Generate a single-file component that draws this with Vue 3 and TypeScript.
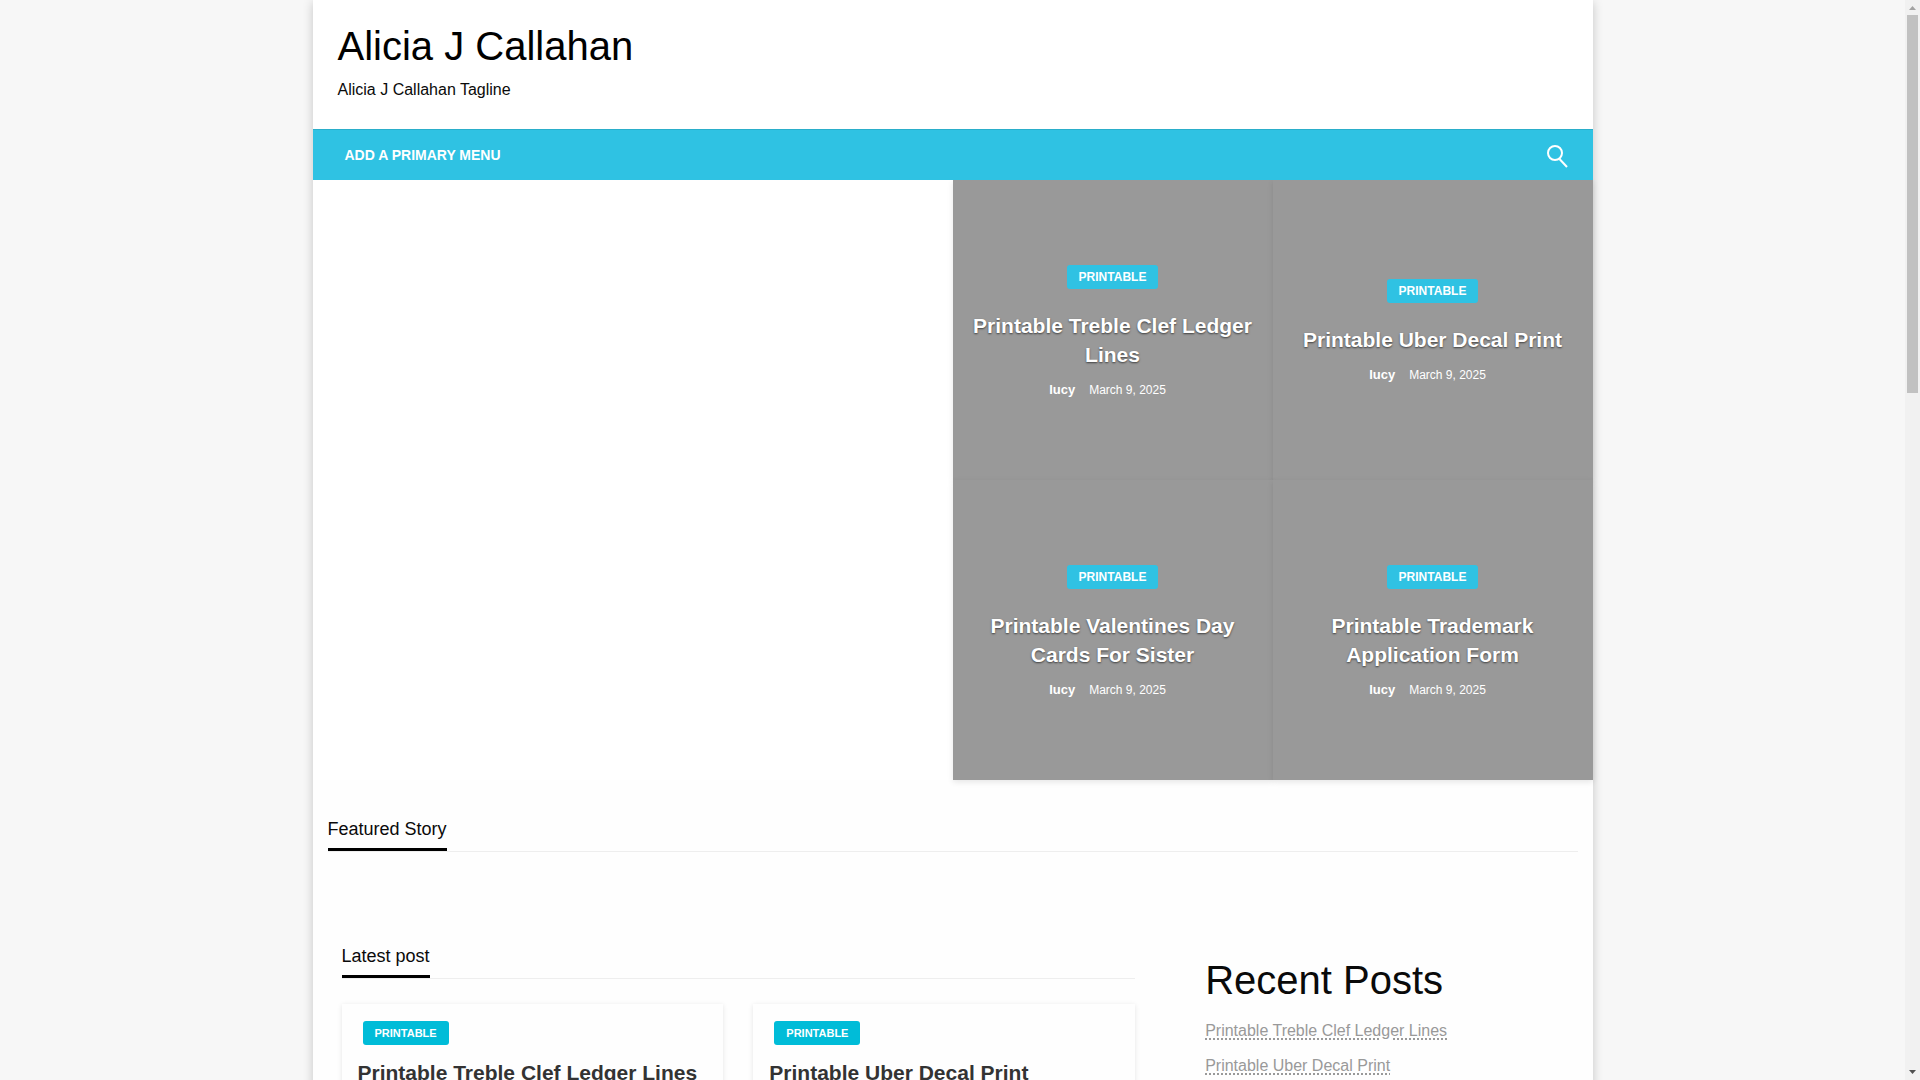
<script setup lang="ts">
interface Story {
  title: string
  category: string
  author: string
  date: string
}

const stories: Story[] = [
  'Printable Treble Clef Ledger Lines',
  'Printable Uber Decal Print',
  'Printable Valentines Day Cards For Sister',
  'Printable Trademark Application Form',
].map((title) => ({ title, category: 'Printable', author: 'lucy', date: 'March 9, 2025' }))

const latest = stories.slice(0, 2)
const recent = stories.slice(0, 2)
</script>

<template>
  <div class="viewport">
    <div class="page">
      <div class="site">
        <header class="masthead">
          <h1 class="site-title"><a href="#">Alicia J Callahan</a></h1>
          <p class="tagline">Alicia J Callahan Tagline</p>
        </header>

        <nav class="menu">
          <a class="menu-link" href="#">Add a primary menu</a>
          <button class="search" type="button" aria-label="Search">
            <svg width="24" height="24" viewBox="0 0 24 24" fill="none" stroke="#fff" stroke-width="2">
              <circle cx="10" cy="9" r="7" />
              <path d="M14.500 15L22 23" />
            </svg>
          </button>
        </nav>

        <section class="hero">
          <div class="slider"></div>
          <div class="tiles">
            <article v-for="story in stories" :key="story.title" class="tile">
              <a class="badge" href="#">{{ story.category }}</a>
              <h2 class="tile-title"><a href="#">{{ story.title }}</a></h2>
              <div class="meta">
                <a class="author" href="#">{{ story.author }}</a>
                <time class="date">{{ story.date }}</time>
              </div>
            </article>
          </div>
        </section>

        <section class="featured">
          <div class="heading"><h2>Featured Story</h2></div>
        </section>

        <div class="columns">
          <main class="posts">
            <div class="heading"><h2>Latest post</h2></div>
            <div class="cards">
              <article v-for="story in latest" :key="story.title" class="card">
                <a class="badge badge-small" href="#">{{ story.category }}</a>
                <h3 class="card-title"><a href="#">{{ story.title }}</a></h3>
              </article>
            </div>
          </main>
          <aside class="sidebar">
            <h2 class="widget-title">Recent Posts</h2>
            <ul class="recent">
              <li v-for="story in recent" :key="story.title"><a href="#">{{ story.title }}</a></li>
            </ul>
          </aside>
        </div>
      </div>
    </div>

    <div class="scrollbar" aria-hidden="true">
      <svg class="arrow" width="15" height="15" viewBox="0 0 15 15"><path d="M4 10L7.500 6L11 10Z" fill="#a3a3a3" /></svg>
      <div class="track"><div class="thumb"></div></div>
      <svg class="arrow" width="15" height="15" viewBox="0 0 15 15"><path d="M4 5L7.500 9L11 5Z" fill="#505050" /></svg>
    </div>
  </div>
</template>

<style>
body {
  margin: 0;
  background: #f7f7f7;
}
</style>

<style scoped>
.viewport {
  display: flex;
  height: 100vh;
  overflow: hidden;
  font-family: "Liberation Sans", Arial, sans-serif;
  font-size: 16px;
  line-height: 24px;
  color: #0a0a0a;
}
.viewport * {
  box-sizing: border-box;
}
a {
  color: inherit;
  text-decoration: none;
}
h1, h2, h3, p, ul {
  margin: 0;
  padding: 0;
  font-weight: 400;
}
.page {
  flex: 1;
  min-width: 0;
}
.site {
  max-width: 1280px;
  min-height: 100%;
  margin: 0 auto;
  background: #fefefe;
  box-shadow: 0 2px 10px rgba(0, 0, 0, 0.2);
}
.masthead {
  padding: 18px 25px 27px;
  background: #fff;
}
.site-title {
  margin-bottom: 4px;
  font-size: 40px;
  line-height: 56px;
  color: #000;
}
.menu {
  position: relative;
  display: flex;
  align-items: center;
  justify-content: space-between;
  height: 51px;
  padding: 0 24px 0 32px;
  background: #2fc2e3;
  border-top: 1px solid #2aaeca;
}
.menu-link {
  font-size: 14px;
  font-weight: 700;
  color: #fff;
  text-transform: uppercase;
}
.search {
  display: flex;
  padding: 2px 0 0;
  border: 0;
  background: none;
}
.hero {
  display: flex;
  background: #fff;
}
.slider {
  flex: 1;
}
.tiles {
  flex: 1;
  display: grid;
  grid-template-columns: 1fr 1fr;
  grid-auto-rows: 300px;
}
.tile {
  display: flex;
  flex-direction: column;
  align-items: center;
  justify-content: center;
  padding: 4px 16px 0;
  background: #999;
  box-shadow: 0 2px 6px rgba(0, 0, 0, 0.1);
  color: #fff;
  text-align: center;
}
.badge {
  padding: 0 12px;
  border-radius: 3px;
  background: #2fc2e3;
  font-size: 12px;
  font-weight: 700;
  line-height: 24px;
  color: #fff;
  text-transform: uppercase;
}
.tile-title {
  margin: 22px 0 11px;
  font-size: 21px;
  font-weight: 700;
  line-height: 29px;
  text-shadow: 0 1px 2px rgba(0, 0, 0, 0.6);
}
.meta {
  display: flex;
  gap: 14px;
  margin-right: 10px;
  font-size: 12px;
  line-height: 20px;
}
.author {
  font-size: 13px;
  font-weight: 700;
}
.featured {
  padding: 36px 15px 0;
}
.heading {
  display: flex;
  border-bottom: 1px solid #eee;
}
.heading h2 {
  padding-bottom: 6px;
  border-bottom: 3px solid #000;
  font-size: 18px;
  line-height: 26px;
}
.columns {
  display: flex;
  padding: 91px 30px 0 29px;
}
.posts {
  flex: 0 0 65%;
  min-width: 0;
}
.cards {
  display: grid;
  grid-template-columns: 1fr 1fr;
  gap: 30px;
  margin-top: 25px;
}
.card {
  min-height: 400px;
  padding: 16px;
  box-shadow: 0 1px 5px rgba(0, 0, 0, 0.1);
}
.badge-small {
  display: inline-block;
  margin-left: 5px;
  background: #00bcd8;
  font-size: 11px;
}
.card-title {
  margin-top: 13px;
  font-size: 21px;
  font-weight: 700;
  line-height: 29px;
  color: #333;
}
.sidebar {
  flex: 1;
  padding: 9px 0 0 70px;
}
.widget-title {
  font-size: 40px;
  line-height: 56px;
}
.recent {
  margin-top: 5px;
  list-style: none;
  line-height: 35px;
  color: #999;
}
.recent a {
  text-decoration: underline dotted 2px;
  text-underline-offset: 2px;
}
.scrollbar {
  display: flex;
  flex-direction: column;
  width: 15px;
  background: #f1f1f1;
}
.track {
  flex: 1;
  padding: 0 2px;
}
.thumb {
  height: 36%;
  background: #c1c1c1;
}
</style>
